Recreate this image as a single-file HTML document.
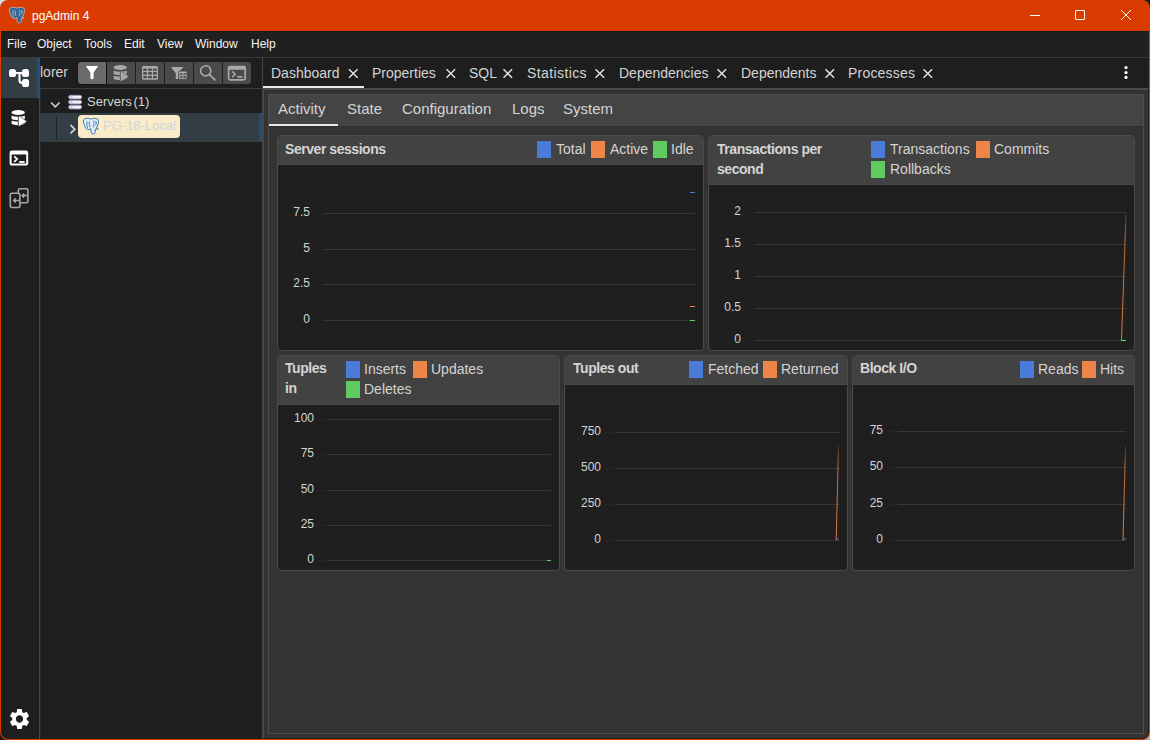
<!DOCTYPE html>
<html><head><meta charset="utf-8">
<style>
*{box-sizing:border-box;margin:0;padding:0}
html,body{width:1150px;height:740px;overflow:hidden;background:#1e1e1e;font-family:"Liberation Sans",sans-serif;}
.a{position:absolute}
.t{position:absolute;line-height:1;white-space:nowrap}
svg{position:absolute;overflow:visible}
#win{position:absolute;left:0;top:0;width:1150px;height:740px;border-radius:8px;background:#da3b01;overflow:hidden}
.menu{position:absolute;top:38px;color:#f4f4f4;font-size:12px;line-height:1;white-space:nowrap}
.tab{position:absolute;top:66px;color:#d4d4d4;font-size:14px;line-height:1;white-space:nowrap}
.stab{position:absolute;top:101px;color:#d4d4d4;font-size:15px;line-height:1;white-space:nowrap}
.card{position:absolute;border:1px solid #4a4a4a;border-radius:4px;background:#1f1f1f;overflow:hidden}
.hd{position:absolute;left:0;top:0;right:0;background:#424242;border-bottom:1px solid #4a4a4a}
.ttl{position:absolute;color:#d4d4d4;font-size:14px;letter-spacing:-0.45px;font-weight:bold;line-height:1;white-space:nowrap}
.lg{position:absolute;color:#d4d4d4;font-size:14px;line-height:1;white-space:nowrap}
.sw{position:absolute;width:14px;height:17px}
.lbl{position:absolute;color:#d4d4d4;font-size:12px;line-height:1;text-align:right;width:40px;white-space:nowrap}
.grid{position:absolute;height:1px;background:#383838}
.tick{position:absolute;height:1px;background:#262626;width:11px}
</style></head><body>
<div class="a" style="left:0;top:0;width:12px;height:12px;background:#d9dde0"></div>
<div class="a" style="left:1138px;top:0;width:12px;height:12px;background:#1b1f28"></div>
<div class="a" style="left:0;top:728px;width:12px;height:12px;background:#1a1a1a"></div>
<div class="a" style="left:1138px;top:728px;width:12px;height:12px;background:#a9a9a9"></div>
<div id="win">
  <!-- title bar -->
  <svg style="left:9px;top:7px" width="16" height="16" viewBox="0 0 16 16">
    <path d="M1.6 0.8C4 -0.1 6.5 0.2 8 1.2 10 0.2 13 0 14.8 1.2 16 2.2 15.6 5 14.8 7 14.3 8.2 13.8 9.2 13.4 10L15.2 10.8C14.5 11.5 13.2 11.3 12.4 11L12.2 14.2C12 15.5 11 16 10 16 8.8 16 8.2 15.2 8.1 14L7.9 10.6C7.2 11.4 6 11.6 4.8 11.4 3.4 11.2 2.6 10.2 2 8.8 1 6.5 0.4 4.5 0.5 3 0.5 2 0.9 1.1 1.6 0.8Z" fill="#336791" stroke="#d7e6f2" stroke-width="0.6"/>
    <path d="M4.2 3.2C3.6 5 3.8 7.8 4.6 10M6.4 3.4C6 5 6.2 7.5 7.2 9.2M9.8 2.6C11.2 3.2 11.6 5 10.6 6.6 10.2 7.4 10.4 8.6 11 9.4M12.4 3C13.6 4 13.4 6 12.6 7.4" stroke="#c9ddee" stroke-width="0.7" fill="none"/>
  </svg>
  <div class="t" style="left:32px;top:10px;font-size:12px;color:#fff">pgAdmin 4</div>
  <div class="a" style="left:1030px;top:15px;width:10px;height:1px;background:#fff"></div>
  <div class="a" style="left:1075px;top:10px;width:10px;height:10px;border:1px solid #fff;border-radius:1px"></div>
  <svg style="left:1121px;top:10px" width="10" height="10" viewBox="0 0 10 10"><path d="M0 0L10 10M10 0L0 10" stroke="#fff" stroke-width="1"/></svg>
  <!-- dark body -->
  <div class="a" style="left:1px;top:31px;width:1148px;height:708px;background:#1e1e1e;border-radius:0 0 7px 7px"></div>
  <div class="a" style="left:1px;top:31px;width:1148px;height:1px;background:#171c1f"></div>
  <div class="a" style="left:1px;top:32px;width:1148px;height:25px;background:#202020"></div>
  <div class="menu" style="left:7px">File</div>
  <div class="menu" style="left:37px">Object</div>
  <div class="menu" style="left:84px">Tools</div>
  <div class="menu" style="left:124px">Edit</div>
  <div class="menu" style="left:157px">View</div>
  <div class="menu" style="left:195px">Window</div>
  <div class="menu" style="left:251px">Help</div>
  <div class="a" style="left:1px;top:57px;width:1148px;height:1px;background:#3a3a3a"></div>

  <!-- sidebar -->
  <div class="a" style="left:1px;top:58px;width:36px;height:40px;background:#333e44"></div>
  <div class="a" style="left:37px;top:58px;width:2px;height:40px;background:#1f4f78"></div>
  <div class="a" style="left:39px;top:58px;width:1px;height:681px;background:#474747"></div>
  <div class="a" style="left:40px;top:89px;width:1px;height:650px;background:#2a2a2a"></div>

  <!-- explorer -->
  <div class="a" style="left:40px;top:58px;width:28px;height:30px;overflow:hidden">
    <div class="t" style="right:0;top:7px;font-size:14px;color:#d4d4d4">Object Explorer</div>
  </div>
  <div class="a" style="left:78px;top:62px;width:28px;height:22px;background:#6b6b6b;border-radius:3px 0 0 3px;box-shadow:0 0 0 1px #141414"></div>
  <div class="a" style="left:107px;top:62px;width:28px;height:22px;background:#4a4a4a"></div>
  <div class="a" style="left:136px;top:62px;width:28px;height:22px;background:#4a4a4a"></div>
  <div class="a" style="left:165px;top:62px;width:28px;height:22px;background:#4a4a4a"></div>
  <div class="a" style="left:194px;top:62px;width:28px;height:22px;background:#4a4a4a"></div>
  <div class="a" style="left:223px;top:62px;width:28px;height:22px;background:#4a4a4a;border-radius:0 3px 3px 0"></div>
  <div class="a" style="left:40px;top:88px;width:222px;height:1px;background:#3a3a3a"></div>

  <!-- tree -->
  <div class="a" style="left:40px;top:113px;width:222px;height:29px;background:#323d44"></div>
  <div class="a" style="left:259px;top:113px;width:3px;height:29px;background:#1f4f78"></div>
  <div class="a" style="left:56px;top:116px;width:1px;height:23px;background:#1e2226"></div>
  <div class="t" style="left:87px;top:95px;font-size:13px;color:#d4d4d4;word-spacing:-2px">Servers (1)</div>
  <div class="a" style="left:78px;top:115px;width:102px;height:23px;background:#faecc8;border-radius:4px"></div>
  <div class="t" style="left:103px;top:119px;font-size:13px;color:#cfd4da">PG-18-Local</div>

  <!-- separator -->
  <div class="a" style="left:262px;top:58px;width:1px;height:681px;background:#454545"></div>

  <!-- main tab bar -->
  <div class="tab" style="left:271px">Dashboard</div>
  <div class="tab" style="left:372px">Properties</div>
  <div class="tab" style="left:469px">SQL</div>
  <div class="tab" style="left:527px;letter-spacing:0.4px">Statistics</div>
  <div class="tab" style="left:619px">Dependencies</div>
  <div class="tab" style="left:741px">Dependents</div>
  <div class="tab" style="left:848px;letter-spacing:0.2px">Processes</div>
  <div class="a" style="left:263px;top:86px;width:101px;height:2px;background:#e8e8e8"></div>
  <div class="a" style="left:40px;top:88px;width:1109px;height:1px;background:#3d3d3d"></div>
  <div class="a" style="left:263px;top:88px;width:885px;height:2px;background:#4b4b4b"></div>

  <!-- main content -->
  <div class="a" style="left:263px;top:90px;width:885px;height:648px;background:#333;border-left:1px solid #484848;border-radius:0 0 6px 0"></div>
  <div class="a" style="left:268px;top:94px;width:876px;height:640px;border:1px solid #4d4d4d;background:#333"></div>
  <div class="a" style="left:269px;top:95px;width:874px;height:31px;background:#444"></div>
  <div class="stab" style="left:278px">Activity</div>
  <div class="stab" style="left:347px">State</div>
  <div class="stab" style="left:402px">Configuration</div>
  <div class="stab" style="left:512px">Logs</div>
  <div class="stab" style="left:563px">System</div>
  <div class="a" style="left:269px;top:124px;width:69px;height:2px;background:#e8e8e8"></div>
  <div class="a" style="left:269px;top:126px;width:874px;height:1px;background:#2e2e2e"></div>


  <!-- sidebar icons -->
  <svg style="left:8px;top:68px" width="22" height="20" viewBox="0 0 22 20">
    <rect x="1" y="1" width="7" height="8" rx="2.6" fill="#fff"/>
    <rect x="14" y="1" width="7" height="8" rx="2.6" fill="#fff"/>
    <rect x="14" y="11" width="7" height="8" rx="2.6" fill="#fff"/>
    <path d="M7 5H15M11.5 5V12.5Q11.5 15 14.5 15" stroke="#fff" stroke-width="2.1" fill="none"/>
  </svg>
  <svg style="left:11px;top:110px" width="16" height="16" viewBox="0 0 16 16">
    <ellipse cx="7.2" cy="2.6" rx="6.6" ry="2.5" fill="#fff"/>
    <path d="M0.6 5.6C2.5 7.2 11.9 7.2 13.8 5.6V9C11.9 10.5 2.5 10.5 0.6 9Z" fill="#fff"/>
    <path d="M0.6 10.4C2.5 11.9 11.9 11.9 13.8 10.4V13.8C11.9 15.6 2.5 15.6 0.6 13.8Z" fill="#fff"/>
    <path d="M6.9 4.9L16.6 11.4 6.9 17.2Z" fill="#1e1e1e"/><path d="M7.9 6.3L15.4 11.4 7.9 16Z" fill="#fff" stroke="#fff" stroke-width="0.4" stroke-linejoin="round"/>
  </svg>
  <svg style="left:9px;top:150px" width="20" height="16" viewBox="0 0 20 16">
    <rect x="1.6" y="1.6" width="16.6" height="12.9" rx="1.6" fill="none" stroke="#fff" stroke-width="2"/>
    <rect x="1" y="1" width="17.8" height="3.6" rx="1.4" fill="#fff"/>
    <path d="M5.2 6.3L8.2 9 5.2 11.8" stroke="#fff" stroke-width="1.7" fill="none"/>
    <rect x="10.2" y="11" width="5.4" height="1.9" fill="#fff"/>
  </svg>
  <svg style="left:9px;top:187px" width="21" height="22" viewBox="0 0 21 22">
    <rect x="9.3" y="1.8" width="9.6" height="14" rx="1.6" fill="none" stroke="#a8a8a8" stroke-width="1.6"/>
    <rect x="1.3" y="6.3" width="9.6" height="14.2" rx="1.6" fill="#1e1e1e" stroke="#a8a8a8" stroke-width="1.6"/>
    <path d="M18 8.6H13.2M15.2 6.6L13.2 8.6 15.2 10.6" stroke="#a8a8a8" stroke-width="1.5" fill="none"/>
    <path d="M10 13.4H4.6M6.7 11.3L4.6 13.4 6.7 15.5" stroke="#a8a8a8" stroke-width="1.5" fill="none"/>
  </svg>
  <svg style="left:9.5px;top:709px" width="19" height="20" viewBox="2.6 2.3 18.8 19.4" preserveAspectRatio="none">
    <path fill="#fff" d="M19.14 12.94c.04-.3.06-.61.06-.94 0-.32-.02-.64-.07-.94l2.03-1.58a.49.49 0 0 0 .12-.61l-1.92-3.32a.488.488 0 0 0-.59-.22l-2.39.96c-.5-.38-1.03-.7-1.62-.94l-.36-2.54a.484.484 0 0 0-.48-.41h-3.84c-.24 0-.43.17-.47.41l-.36 2.54c-.59.24-1.13.57-1.62.94l-2.39-.96c-.22-.08-.47 0-.59.22L2.74 8.87c-.12.21-.08.47.12.61l2.03 1.58c-.05.3-.09.63-.09.94s.02.64.07.94l-2.03 1.58a.49.49 0 0 0-.12.61l1.92 3.32c.12.22.37.29.59.22l2.39-.96c.5.38 1.03.7 1.62.94l.36 2.54c.05.24.24.41.48.41h3.84c.24 0 .44-.17.47-.41l.36-2.54c.59-.24 1.13-.56 1.62-.94l2.39.96c.22.08.47 0 .59-.22l1.92-3.32c.12-.22.07-.47-.12-.61l-2.01-1.58zM12 15.6c-1.98 0-3.6-1.62-3.6-3.6s1.62-3.6 3.6-3.6 3.6 1.62 3.6 3.6-1.62 3.6-3.6 3.6z"/>
  </svg>

  <!-- toolbar icons -->
  <svg style="left:85px;top:66px" width="14" height="14" viewBox="0 0 14 14">
    <path d="M0.8 0H13.2L8.6 6.6V12.2Q7 14.2 5.4 12.2V6.6Z" fill="#fff"/>
  </svg>
  <svg style="left:113px;top:65px" width="16" height="16" viewBox="0 0 16 16">
    <ellipse cx="7.2" cy="2.6" rx="6.6" ry="2.5" fill="#a9a9a9"/>
    <path d="M0.6 5.6C2.5 7.2 11.9 7.2 13.8 5.6V9C11.9 10.5 2.5 10.5 0.6 9Z" fill="#a9a9a9"/>
    <path d="M0.6 10.4C2.5 11.9 11.9 11.9 13.8 10.4V13.8C11.9 15.6 2.5 15.6 0.6 13.8Z" fill="#a9a9a9"/>
    <path d="M6.9 4.9L16.6 11.4 6.9 17.2Z" fill="#4a4a4a"/><path d="M7.9 6.3L15.4 11.4 7.9 16Z" fill="#a9a9a9" stroke="#a9a9a9" stroke-width="0.4" stroke-linejoin="round"/>
  </svg>
  <svg style="left:142px;top:66px" width="16" height="14" viewBox="0 0 16 14">
    <rect x="0" y="0" width="16" height="13.8" rx="1.6" fill="#a9a9a9"/>
    <g fill="#4a4a4a">
      <rect x="1.3" y="2.6" width="3.5" height="2.2"/><rect x="6.1" y="2.6" width="3.8" height="2.2"/><rect x="11.1" y="2.6" width="3.6" height="2.2"/>
      <rect x="1.3" y="6.1" width="3.5" height="2.5"/><rect x="6.1" y="6.1" width="3.8" height="2.5"/><rect x="11.1" y="6.1" width="3.6" height="2.5"/>
      <rect x="1.3" y="9.9" width="3.5" height="2.3"/><rect x="6.1" y="9.9" width="3.8" height="2.3"/><rect x="11.1" y="9.9" width="3.6" height="2.3"/>
    </g>
  </svg>
  <svg style="left:171px;top:67px" width="17" height="13" viewBox="0 0 17 13">
    <path d="M0 0H12.4L7 6.2V11.9H4.8V6.2Z" fill="#a9a9a9"/>
    <rect x="7.6" y="4.1" width="8.4" height="8.1" rx="1" fill="#a9a9a9" stroke="#4a4a4a" stroke-width="0.8"/>
    <g fill="#4a4a4a"><rect x="9.2" y="6.4" width="2.3" height="1.6"/><rect x="12.5" y="6.4" width="2.3" height="1.6"/><rect x="9.2" y="9" width="2.3" height="1.8"/><rect x="12.5" y="9" width="2.3" height="1.8"/></g>
  </svg>
  <svg style="left:199px;top:64px" width="18" height="18" viewBox="0 0 18 18">
    <circle cx="6.7" cy="6.8" r="5.1" fill="none" stroke="#a9a9a9" stroke-width="1.6"/>
    <path d="M10.4 10.5L16.4 16.4" stroke="#a9a9a9" stroke-width="1.7"/>
  </svg>
  <svg style="left:227px;top:65px" width="20" height="17" viewBox="0 0 20 17">
    <rect x="1.6" y="1.6" width="16.6" height="13.3" rx="1.6" fill="none" stroke="#a9a9a9" stroke-width="1.7"/>
    <rect x="1" y="1" width="17.8" height="3.8" rx="1.4" fill="#a9a9a9"/>
    <path d="M5.2 6.4L8.2 9.2 5.2 12.1" stroke="#a9a9a9" stroke-width="1.5" fill="none"/>
    <rect x="10.2" y="11" width="5.2" height="1.7" fill="#a9a9a9"/>
  </svg>

  <!-- tree icons -->
  <svg style="left:50px;top:101px" width="11" height="8" viewBox="0 0 11 8">
    <path d="M1 1.5L5.3 5.8 9.6 1.5" stroke="#d0d0d0" stroke-width="1.6" fill="none"/>
  </svg>
  <svg style="left:68px;top:94px" width="15" height="16" viewBox="0 0 15 16">
    <g fill="#f4f4f8" stroke="#9d93bd" stroke-width="1">
      <rect x="0.7" y="1.3" width="13" height="3.6" rx="1.8"/>
      <rect x="0.7" y="6.3" width="13" height="3.6" rx="1.8"/>
      <rect x="0.7" y="11.3" width="13" height="3.6" rx="1.8"/>
    </g>
    <g stroke="#9d93bd" stroke-width="0.9"><path d="M2.3 3.1H4.6M2.3 8.1H4.6M2.3 13.1H4.6"/></g>
  </svg>
  <svg style="left:68.5px;top:124px" width="8" height="11" viewBox="0 0 8 11">
    <path d="M1.5 1L5.8 5.2 1.5 9.4" stroke="#cfcfcf" stroke-width="1.8" fill="none"/>
  </svg>
  <svg style="left:83px;top:118px" width="16" height="16" viewBox="0 0 16 16">
    <path d="M1.6 0.8C4 -0.1 6.5 0.2 8 1.2 10 0.2 13 0 14.8 1.2 16 2.2 15.6 5 14.8 7 14.3 8.2 13.8 9.2 13.4 10L15.2 10.8C14.5 11.5 13.2 11.3 12.4 11L12.2 14.2C12 15.5 11 16 10 16 8.8 16 8.2 15.2 8.1 14L7.9 10.6C7.2 11.4 6 11.6 4.8 11.4 3.4 11.2 2.6 10.2 2 8.8 1 6.5 0.4 4.5 0.5 3 0.5 2 0.9 1.1 1.6 0.8Z" fill="#dceefa" stroke="#2f6aa0" stroke-width="0.9"/>
    <path d="M4.2 3.2C3.6 5 3.8 7.8 4.6 10M6.4 3.4C6 5 6.2 7.5 7.2 9.2M9.8 2.6C11.2 3.2 11.6 5 10.6 6.6 10.2 7.4 10.4 8.6 11 9.4M12.4 3C13.6 4 13.4 6 12.6 7.4" stroke="#2f6aa0" stroke-width="0.8" fill="none"/>
  </svg>

  <!-- tab close icons -->
  <svg style="left:0;top:0" width="1150" height="90">
    <g stroke="#e6e6e6" stroke-width="1.4" fill="none">
      <path d="M349 69.2L357.6 77.8M357.6 69.2L349 77.8"/>
      <path d="M446.5 69.2L455.1 77.8M455.1 69.2L446.5 77.8"/>
      <path d="M503.5 69.2L512.1 77.8M512.1 69.2L503.5 77.8"/>
      <path d="M595.5 69.2L604.1 77.8M604.1 69.2L595.5 77.8"/>
      <path d="M717.5 69.2L726.1 77.8M726.1 69.2L717.5 77.8"/>
      <path d="M825.5 69.2L834.1 77.8M834.1 69.2L825.5 77.8"/>
      <path d="M923.5 69.2L932.1 77.8M932.1 69.2L923.5 77.8"/>
    </g>
    <g fill="#fff"><circle cx="1126" cy="67.6" r="1.6"/><circle cx="1126" cy="72.6" r="1.6"/><circle cx="1126" cy="77.4" r="1.6"/></g>
  </svg>
  <!-- CARDS -->
  <div class="card" style="left:277px;top:135px;width:427px;height:216px"><div class="hd" style="height:29px"></div></div>
  <div class="card" style="left:708px;top:135px;width:427px;height:216px"><div class="hd" style="height:49px"></div></div>
  <div class="card" style="left:277px;top:355px;width:283px;height:216px"><div class="hd" style="height:49px"></div></div>
  <div class="card" style="left:564px;top:355px;width:284px;height:216px"><div class="hd" style="height:29px"></div></div>
  <div class="card" style="left:852px;top:355px;width:283px;height:216px"><div class="hd" style="height:29px"></div></div>

  <!-- card1 header -->
  <div class="ttl" style="left:285px;top:142px">Server sessions</div>
  <div class="sw" style="left:537px;top:141px;background:#4b7bd8"></div>
  <div class="lg" style="left:556px;top:142px">Total</div>
  <div class="sw" style="left:591px;top:141px;background:#ee8548"></div>
  <div class="lg" style="left:610px;top:142px">Active</div>
  <div class="sw" style="left:653px;top:141px;background:#5fca60"></div>
  <div class="lg" style="left:671px;top:142px">Idle</div>
  <!-- card2 header -->
  <div class="ttl" style="left:717px;top:142px">Transactions per</div>
  <div class="ttl" style="left:717px;top:162px">second</div>
  <div class="sw" style="left:871px;top:141px;background:#4b7bd8"></div>
  <div class="lg" style="left:890px;top:142px">Transactions</div>
  <div class="sw" style="left:976px;top:141px;background:#ee8548"></div>
  <div class="lg" style="left:994px;top:142px">Commits</div>
  <div class="sw" style="left:871px;top:161px;background:#5fca60"></div>
  <div class="lg" style="left:890px;top:162px">Rollbacks</div>
  <!-- card3 header -->
  <div class="ttl" style="left:285px;top:361px">Tuples</div>
  <div class="ttl" style="left:285px;top:381px">in</div>
  <div class="sw" style="left:346px;top:361px;background:#4b7bd8"></div>
  <div class="lg" style="left:364px;top:362px">Inserts</div>
  <div class="sw" style="left:413px;top:361px;background:#ee8548"></div>
  <div class="lg" style="left:431px;top:362px">Updates</div>
  <div class="sw" style="left:346px;top:381px;background:#5fca60"></div>
  <div class="lg" style="left:364px;top:382px">Deletes</div>
  <!-- card4 header -->
  <div class="ttl" style="left:573px;top:361px">Tuples out</div>
  <div class="sw" style="left:689px;top:361px;background:#4b7bd8"></div>
  <div class="lg" style="left:708px;top:362px">Fetched</div>
  <div class="sw" style="left:763px;top:361px;background:#ee8548"></div>
  <div class="lg" style="left:781px;top:362px">Returned</div>
  <!-- card5 header -->
  <div class="ttl" style="left:860px;top:361px">Block I/O</div>
  <div class="sw" style="left:1020px;top:361px;background:#4b7bd8"></div>
  <div class="lg" style="left:1038px;top:362px">Reads</div>
  <div class="sw" style="left:1082px;top:361px;background:#ee8548"></div>
  <div class="lg" style="left:1100px;top:362px">Hits</div>
  <!-- charts -->
  <div class="lbl" style="left:270px;top:206px">7.5</div>
  <div class="tick" style="left:314px;top:213px"></div>
  <div class="grid" style="left:325px;top:213px;width:370px"></div>
  <div class="lbl" style="left:270px;top:242px">5</div>
  <div class="tick" style="left:314px;top:249px"></div>
  <div class="grid" style="left:325px;top:249px;width:370px"></div>
  <div class="lbl" style="left:270px;top:277px">2.5</div>
  <div class="tick" style="left:314px;top:284px"></div>
  <div class="grid" style="left:325px;top:284px;width:370px"></div>
  <div class="lbl" style="left:270px;top:313px">0</div>
  <div class="tick" style="left:314px;top:320px"></div>
  <div class="grid" style="left:325px;top:320px;width:370px"></div>
  <div class="lbl" style="left:701px;top:205px">2</div>
  <div class="tick" style="left:745px;top:212px"></div>
  <div class="grid" style="left:756px;top:212px;width:370px"></div>
  <div class="lbl" style="left:701px;top:237px">1.5</div>
  <div class="tick" style="left:745px;top:244px"></div>
  <div class="grid" style="left:756px;top:244px;width:370px"></div>
  <div class="lbl" style="left:701px;top:269px">1</div>
  <div class="tick" style="left:745px;top:276px"></div>
  <div class="grid" style="left:756px;top:276px;width:370px"></div>
  <div class="lbl" style="left:701px;top:301px">0.5</div>
  <div class="tick" style="left:745px;top:308px"></div>
  <div class="grid" style="left:756px;top:308px;width:370px"></div>
  <div class="lbl" style="left:701px;top:333px">0</div>
  <div class="tick" style="left:745px;top:340px"></div>
  <div class="grid" style="left:756px;top:340px;width:370px"></div>
  <div class="lbl" style="left:274px;top:412px">100</div>
  <div class="tick" style="left:318px;top:419px"></div>
  <div class="grid" style="left:329px;top:419px;width:222px"></div>
  <div class="lbl" style="left:274px;top:447px">75</div>
  <div class="tick" style="left:318px;top:454px"></div>
  <div class="grid" style="left:329px;top:454px;width:222px"></div>
  <div class="lbl" style="left:274px;top:483px">50</div>
  <div class="tick" style="left:318px;top:490px"></div>
  <div class="grid" style="left:329px;top:490px;width:222px"></div>
  <div class="lbl" style="left:274px;top:518px">25</div>
  <div class="tick" style="left:318px;top:525px"></div>
  <div class="grid" style="left:329px;top:525px;width:222px"></div>
  <div class="lbl" style="left:274px;top:553px">0</div>
  <div class="tick" style="left:318px;top:560px"></div>
  <div class="grid" style="left:329px;top:560px;width:222px"></div>
  <div class="lbl" style="left:561px;top:425px">750</div>
  <div class="tick" style="left:605px;top:432px"></div>
  <div class="grid" style="left:616px;top:432px;width:223px"></div>
  <div class="lbl" style="left:561px;top:461px">500</div>
  <div class="tick" style="left:605px;top:468px"></div>
  <div class="grid" style="left:616px;top:468px;width:223px"></div>
  <div class="lbl" style="left:561px;top:497px">250</div>
  <div class="tick" style="left:605px;top:504px"></div>
  <div class="grid" style="left:616px;top:504px;width:223px"></div>
  <div class="lbl" style="left:561px;top:533px">0</div>
  <div class="tick" style="left:605px;top:540px"></div>
  <div class="grid" style="left:616px;top:540px;width:223px"></div>
  <div class="lbl" style="left:843px;top:424px">75</div>
  <div class="tick" style="left:887px;top:431px"></div>
  <div class="grid" style="left:898px;top:431px;width:228px"></div>
  <div class="lbl" style="left:843px;top:460px">50</div>
  <div class="tick" style="left:887px;top:467px"></div>
  <div class="grid" style="left:898px;top:467px;width:228px"></div>
  <div class="lbl" style="left:843px;top:497px">25</div>
  <div class="tick" style="left:887px;top:504px"></div>
  <div class="grid" style="left:898px;top:504px;width:228px"></div>
  <div class="lbl" style="left:843px;top:533px">0</div>
  <div class="tick" style="left:887px;top:540px"></div>
  <div class="grid" style="left:898px;top:540px;width:228px"></div>
  <svg style="left:0;top:0" width="1150" height="740">
    <defs>
      <linearGradient id="g1" gradientUnits="userSpaceOnUse" x1="0" y1="214" x2="0" y2="340"><stop offset="0" stop-color="#ee8548" stop-opacity="0.25"/><stop offset="0.2" stop-color="#ee8548" stop-opacity="0.85"/><stop offset="1" stop-color="#ee8548"/></linearGradient>
      <linearGradient id="g2" gradientUnits="userSpaceOnUse" x1="0" y1="446" x2="0" y2="540"><stop offset="0" stop-color="#ee8548" stop-opacity="0.2"/><stop offset="0.22" stop-color="#ee8548" stop-opacity="0.85"/><stop offset="1" stop-color="#ee8548"/></linearGradient>
    </defs>
    <path d="M690 192.5H695" stroke="#4b7bd8" stroke-width="1"/>
    <path d="M690 306.5H695" stroke="#ee8548" stroke-width="1"/>
    <path d="M690 320.5H695" stroke="#5fca60" stroke-width="1"/>
    <path d="M1126 214L1121.5 340" stroke="url(#g1)" stroke-width="0.9"/>
    <path d="M1121 340.5H1126" stroke="#5fca60" stroke-width="1.2"/>
    <path d="M547 560.5H551" stroke="#5fca60" stroke-width="1"/>
    <path d="M838.5 446L836.2 540" stroke="url(#g2)" stroke-width="0.9"/>
    <path d="M836.5 540L839 538" stroke="#4b7bd8" stroke-width="1"/>
    <path d="M1125.5 446L1123 540" stroke="url(#g2)" stroke-width="0.9"/>
    <path d="M1123.3 540L1126 538" stroke="#4b7bd8" stroke-width="1"/>
  </svg>
</div>
</body></html>
